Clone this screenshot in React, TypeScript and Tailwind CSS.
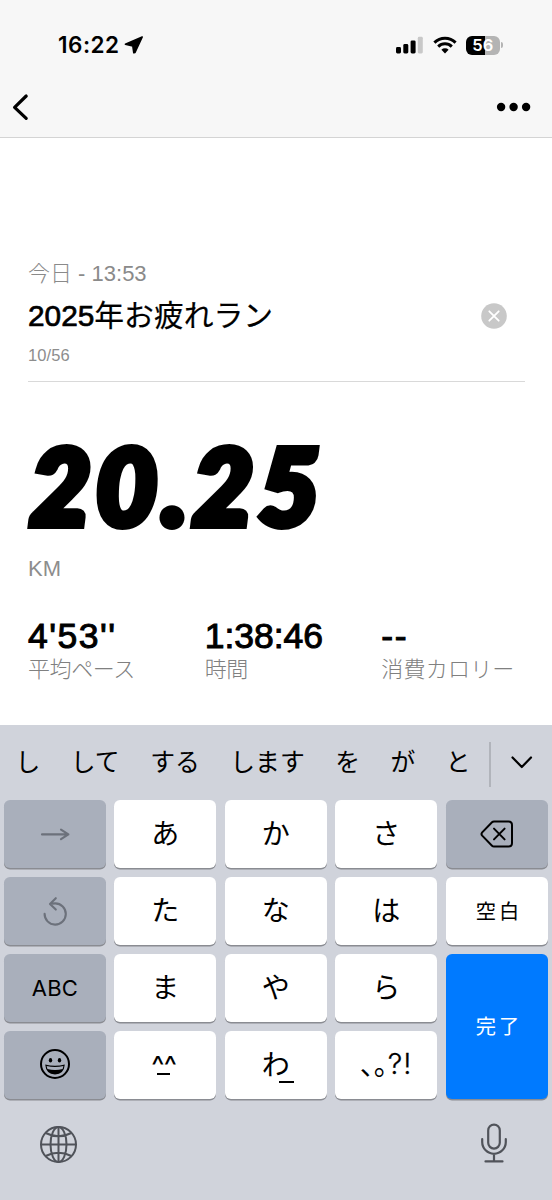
import type { ReactNode } from "react";

const candidates = ["し", "して", "する", "します", "を", "が", "と"];

const stats = [
  { value: "4'53''", label: "平均ペース", valueClass: "tracking-[1.5px]", labelClass: "tracking-[-0.4px]" },
  { value: "1:38:46", label: "時間", valueClass: "", labelClass: "tracking-[-0.4px]" },
  { value: "--", label: "消費カロリー", valueClass: "tracking-[1.5px]", labelClass: "tracking-[0.2px]" },
];

function Key({ tone = "light", className = "", children }: { tone?: "light" | "dark" | "blue"; className?: string; children: ReactNode }) {
  const tones = {
    light: "bg-white text-black",
    dark: "bg-[#a9afbb] text-black",
    blue: "bg-[#007aff] text-white",
  };
  return (
    <button
      className={`flex items-center justify-center rounded-[6px] shadow-[0_1.5px_0_#8a8c92] text-[28px] leading-none ${tones[tone]} ${className}`}
    >
      {children}
    </button>
  );
}

function StatusBar() {
  return (
    <div className="flex h-[90px] items-center justify-between pl-[58px] pr-[49px]">
      <div className="flex items-center gap-[4px]">
        <span className="font-[Inter,sans-serif] text-[22.5px] font-semibold leading-none tracking-[0.5px]">16:22</span>
        <svg width="20" height="18" viewBox="0 0 20 18" stroke="#000" strokeWidth="1.6" strokeLinejoin="round">
          <path d="M18.2 1 1.4 8.2 8.8 10 9.8 16.8 11 16.4Z" />
        </svg>
      </div>
      <div className="flex items-center">
        <svg width="28" height="18" viewBox="0 0 28 18">
          <rect x="0" y="11" width="5" height="6.4" rx="1.4" />
          <rect x="7.3" y="8" width="5" height="9.4" rx="1.4" />
          <rect x="14.6" y="4.4" width="5" height="13" rx="1.4" />
          <rect x="21.8" y=".8" width="5" height="16.6" rx="1.4" fill="#c8c8c8" />
        </svg>
        <svg className="ml-[9px]" width="24" height="18" viewBox="0 0 24 18">
          <g fill="none" stroke="#000" strokeWidth="3">
            <path d="M1.4 6.6a15.2 15.2 0 0 1 21.2 0" />
            <path d="M5.2 10.6a9.8 9.8 0 0 1 13.6 0" />
          </g>
          <path d="M12 17.4 8.4 13.7a5.2 5.2 0 0 1 7.2 0Z" />
        </svg>
        <div className="ml-[9px] flex h-[19px] w-[34.5px] items-center justify-center rounded-[6px] bg-[linear-gradient(90deg,#000_56%,#b4b4b4_56%)] font-[Inter,sans-serif] text-[16.5px] font-semibold leading-none text-white">
          56
        </div>
        <div className="ml-[1px] h-[6px] w-[2px] rounded-r-full bg-[#b4b4b4]" />
      </div>
    </div>
  );
}

export default function App() {
  return (
    <div className="flex h-[1200px] w-[552px] flex-col overflow-hidden bg-white font-['Liberation_Sans','Noto_Sans_CJK_JP',sans-serif] text-black">
      <header className="h-[138px] shrink-0 border-b border-[#d4d4d4] bg-[#f7f7f7]">
        <StatusBar />
        <div className="flex h-[34px] items-center justify-between pl-[12px] pr-[21px]">
          <svg width="18" height="28" viewBox="0 0 18 28" fill="none" stroke="#000" strokeWidth="3.2" strokeLinecap="round" strokeLinejoin="round">
            <path d="M14.2 3 2.6 14.3 14.2 25.4" />
          </svg>
          <svg width="35" height="10" viewBox="0 0 35 10">
            <circle cx="5.1" cy="5" r="4.2" />
            <circle cx="17.6" cy="5" r="4.2" />
            <circle cx="30.1" cy="5" r="4.2" />
          </svg>
        </div>
      </header>

      <main className="flex h-[587px] shrink-0 flex-col px-7">
        <p className="mt-[121px] h-[30px] text-[22px] font-light leading-[30px] text-[#8a8a8a]">今日 - 13:53</p>
        <div className="mt-[7px] flex h-[40px] items-center justify-between pr-[17px]">
          <h1 className="text-[29.8px] leading-[40px]">
            <span className="[-webkit-text-stroke:0.7px_black]">2025</span>
            <span className="[-webkit-text-stroke:0.2px_black]">年お疲れラン</span>
          </h1>
          <svg width="26" height="26" viewBox="0 0 26 26">
            <circle cx="13" cy="13" r="12.8" fill="#c8c8c8" />
            <path d="M8.3 8.3l9.4 9.4M17.7 8.3l-9.4 9.4" stroke="#fff" strokeWidth="1.8" strokeLinecap="round" />
          </svg>
        </div>
        <p className="mt-[9px] h-[20px] text-[16.5px] leading-[20px] tracking-[0.1px] text-[#8d8d8d]">10/56</p>
        <div className="mt-[16px] h-px w-[497px] bg-[#d9d9d9]" />
        <p className="mt-[42px] h-[120px] origin-left whitespace-nowrap pl-[2px] font-[Lato,sans-serif] text-[105px] font-black italic leading-[120px] tracking-[5.2px] [-webkit-text-stroke:8px_black]">
          20.25
        </p>
        <p className="mt-[11px] h-[28px] text-[22px] leading-[28px] text-[#8d8d8d]">KM</p>
        <div className="mt-[33px] grid w-[530px] grid-cols-3">
          {stats.map((stat) => (
            <div key={stat.label} className="flex flex-col">
              <span className={`h-[40px] text-[35.5px] leading-[40px] [-webkit-text-stroke:1px_black] ${stat.valueClass}`}>{stat.value}</span>
              <span className={`h-[28px] whitespace-nowrap text-[22px] font-light leading-[28px] text-[#808080] ${stat.labelClass}`}>{stat.label}</span>
            </div>
          ))}
        </div>
      </main>

      <section className="flex-1 bg-[#d0d3db] font-['Noto_Sans_CJK_JP',sans-serif]">
        <div className="flex h-[75px] items-center">
          <div className="flex w-[489px] gap-[30.5px] whitespace-nowrap pb-[4px] pl-[15.5px] text-[24.8px] leading-none">
            {candidates.map((word) => (
              <span key={word}>{word}</span>
            ))}
          </div>
          <div className="mt-[4px] h-[45px] w-[1.5px] bg-[#b1b4bb]" />
          <svg className="ml-[19px]" width="24" height="16" viewBox="0 0 24 16" fill="none" stroke="#000" strokeWidth="2.2" strokeLinecap="round" strokeLinejoin="round">
            <path d="M2.5 2.5 11.8 12 21 2.5" />
          </svg>
        </div>

        <div className="grid grid-cols-5 grid-rows-[67.5px_67.5px_67.5px_67.5px] gap-x-[8.5px] gap-y-[9.5px] pl-[4px] pr-[4.5px]">
          <Key tone="dark">
            <svg width="30" height="14" viewBox="0 0 30 14" fill="none" stroke="#6c717b" strokeWidth="2.1" strokeLinecap="round" strokeLinejoin="round">
              <path d="M2 7.4H28.4M21 2.6 28.4 7.4 21 12.2" />
            </svg>
          </Key>
          <Key className="pb-[4px]">あ</Key>
          <Key className="pb-[4px]">か</Key>
          <Key className="pb-[4px]">さ</Key>
          <Key tone="dark">
            <svg width="34" height="28" viewBox="0 0 34 28" fill="none" stroke="#000" strokeWidth="2" strokeLinecap="round" strokeLinejoin="round">
              <path d="M14 1.5H28.5Q32 1.5 32 5V23Q32 26.5 28.5 26.5H14Q12.8 26.5 12 25.7L2.2 15.6Q.8 14 2.2 12.4L12 2.3Q12.8 1.5 14 1.5Z" />
              <path d="M14 8.6 24.6 19.4M24.6 8.6 14 19.4" />
            </svg>
          </Key>

          <Key tone="dark">
            <svg width="26" height="30" viewBox="0 0 26 30" fill="none" stroke="#6c717b" strokeWidth="2.1" strokeLinecap="round" strokeLinejoin="round">
              <path d="M2.6 17.8A10.6 10.6 0 1 0 13.2 7.4Q10.5 7.4 8 8M13.8 2.2 8 8 13.8 13.6" />
            </svg>
          </Key>
          <Key className="pb-[4px]">た</Key>
          <Key className="pb-[4px]">な</Key>
          <Key className="pb-[4px]">は</Key>
          <Key className="pb-[2px] pl-[5px] tracking-[3px]">
            <span className="text-[20.3px]">空白</span>
          </Key>

          <Key tone="dark">
            <span className="font-[Inter,sans-serif] text-[22px] tracking-[0.3px]">ABC</span>
          </Key>
          <Key className="pb-[4px]">ま</Key>
          <Key className="pb-[4px]">や</Key>
          <Key className="pb-[4px]">ら</Key>
          <Key tone="blue" className="row-span-2 pb-[2px] pl-[5px] tracking-[3px]">
            <span className="text-[20.3px]">完了</span>
          </Key>

          <Key tone="dark" className="pb-[2px]">
            <svg width="32" height="32" viewBox="0 0 32 32">
              <circle cx="16" cy="16" r="14" fill="none" stroke="#000" strokeWidth="2" />
              <ellipse cx="11.5" cy="12.2" rx="1.7" ry="2.2" />
              <ellipse cx="20.5" cy="12.2" rx="1.7" ry="2.2" />
              <path d="M6.2 16.6Q16 19 25.8 16.6Q25 26.4 16 26.5Q7 26.4 6.2 16.6Z" />
              <path d="M7.6 18Q16 20 24.4 18L23.6 21Q16 22.8 8.4 21Z" fill="#a9afbb" />
            </svg>
          </Key>
          <Key className="pb-[3px] pr-[3px]">
            <span className="flex flex-col items-center font-[Inter,sans-serif]">
              <span className="h-[18px] text-[28px] leading-[28px] tracking-[-0.5px]">^^</span>
              <span className="mt-[3px] h-[1.8px] w-[13px] bg-black" />
            </span>
          </Key>
          <Key className="pb-[4px]">
            <span className="relative">
              わ
              <span className="absolute -bottom-[6px] left-[17px] h-[1.8px] w-[15px] bg-black" />
            </span>
          </Key>
          <Key className="pb-[3px]">
            <span className="flex items-center">
              <span className="[font-feature-settings:'halt']">、。</span>
              <span className="font-[Inter,sans-serif] text-[29px] font-light tracking-[1px] [-webkit-text-stroke:0.3px_black]">?!</span>
            </span>
          </Key>
        </div>

        <div className="mt-[24.5px] flex items-end justify-between pl-[39px] pr-[44.5px]">
          <svg width="39" height="39" viewBox="0 0 39 39" fill="none" stroke="#50535a" strokeWidth="2">
            <circle cx="19.5" cy="19.5" r="17.5" />
            <ellipse cx="19.5" cy="19.5" rx="8" ry="17.5" />
            <path d="M19.5 2V37M2 19.5H37M6.7 8Q19.5 14.6 32.3 8M6.7 31Q19.5 24.4 32.3 31" />
          </svg>
          <svg width="28" height="41" viewBox="0 0 28 41" fill="none" stroke="#50535a" strokeWidth="2.2" strokeLinecap="round">
            <rect x="8.2" y="1.6" width="11.6" height="24" rx="5.8" />
            <path d="M2.2 16V19A11.8 11.8 0 0 0 25.8 19V16M14 31V38.4M5.5 38.4H22.5" />
          </svg>
        </div>
      </section>
    </div>
  );
}
